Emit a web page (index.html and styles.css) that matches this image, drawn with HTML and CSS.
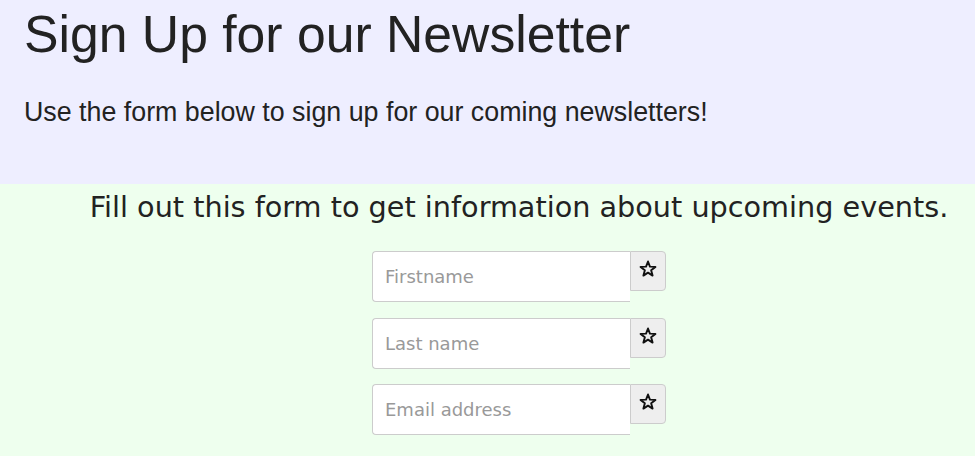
FILE: index.html
```html
<!DOCTYPE html>
<html lang="en">
<head>
<meta charset="utf-8">
<title>Sign Up for our Newsletter</title>
<link rel="stylesheet" href="styles.css">
</head>
<body>
<header class="hero">
  <h1 class="hero-title">Sign Up for our Newsletter</h1>
  <p class="hero-lead">Use the form below to sign up for our coming newsletters!</p>
</header>
<main class="signup">
  <p class="signup-intro">Fill out this form to get information about upcoming events.</p>
  <form class="signup-form">
    <div class="input-group">
      <input class="field" type="text" placeholder="Firstname">
      <span class="addon"><svg class="star" viewBox="0 0 18 18" width="18" height="18"><path d="M9 1.5 L10.94 6.63 L16.42 6.89 L12.14 10.32 L13.58 15.61 L9 12.6 L4.42 15.61 L5.86 10.32 L1.58 6.89 L7.06 6.63 Z"/></svg></span>
    </div>
    <div class="input-group">
      <input class="field" type="text" placeholder="Last name">
      <span class="addon"><svg class="star" viewBox="0 0 18 18" width="18" height="18"><path d="M9 1.5 L10.94 6.63 L16.42 6.89 L12.14 10.32 L13.58 15.61 L9 12.6 L4.42 15.61 L5.86 10.32 L1.58 6.89 L7.06 6.63 Z"/></svg></span>
    </div>
    <div class="input-group">
      <input class="field" type="email" placeholder="Email address">
      <span class="addon"><svg class="star" viewBox="0 0 18 18" width="18" height="18"><path d="M9 1.5 L10.94 6.63 L16.42 6.89 L12.14 10.32 L13.58 15.61 L9 12.6 L4.42 15.61 L5.86 10.32 L1.58 6.89 L7.06 6.63 Z"/></svg></span>
    </div>
  </form>
</main>
</body>
</html>
```
FILE: styles.css
```css
html, body {
  margin: 0;
  padding: 0;
}
body {
  font-family: "Liberation Sans", Arial, sans-serif;
  color: #222;
  background: #eeffee;
}
.hero {
  background: #eeeeff;
  height: 184px;
  box-sizing: border-box;
  padding: 4px 24px 0;
}
.hero-title {
  margin: 0;
  font-size: 51.7px;
  font-weight: normal;
  line-height: normal;
}
.hero-lead {
  margin: 33px 0 0;
  font-size: 26.8px;
}
.signup {
  background: #eeffee;
  min-height: 272px;
  padding: 6px 0 0 63px;
  display: flex;
  flex-direction: column;
  align-items: center;
}
.signup-intro {
  margin: 0;
  font-family: "DejaVu Sans", Verdana, sans-serif;
  font-size: 28.7px;
  line-height: normal;
  color: #222;
}
.signup-form {
  margin-top: 27px;
  display: flex;
  flex-direction: column;
  gap: 15.5px;
}
.input-group {
  display: flex;
  align-items: flex-start;
}
.field {
  box-sizing: border-box;
  width: 258px;
  height: 51px;
  margin: 0;
  padding: 0 12px;
  border: 1px solid #ccc;
  border-right: none;
  border-radius: 4px 0 0 4px;
  background: #fff;
  font-family: "DejaVu Sans", Verdana, sans-serif;
  font-size: 18px;
  color: #555;
  outline: none;
}
.field::placeholder {
  color: #999;
}
.addon {
  box-sizing: border-box;
  width: 36px;
  height: 40px;
  display: flex;
  align-items: center;
  justify-content: center;
  padding-bottom: 4px;
  background: #eee;
  border: 1px solid #ccc;
  border-radius: 0 4px 4px 0;
}
.star {
  display: block;
  fill: none;
  stroke: #111;
  stroke-width: 1.9;
  stroke-linejoin: round;
}
```
